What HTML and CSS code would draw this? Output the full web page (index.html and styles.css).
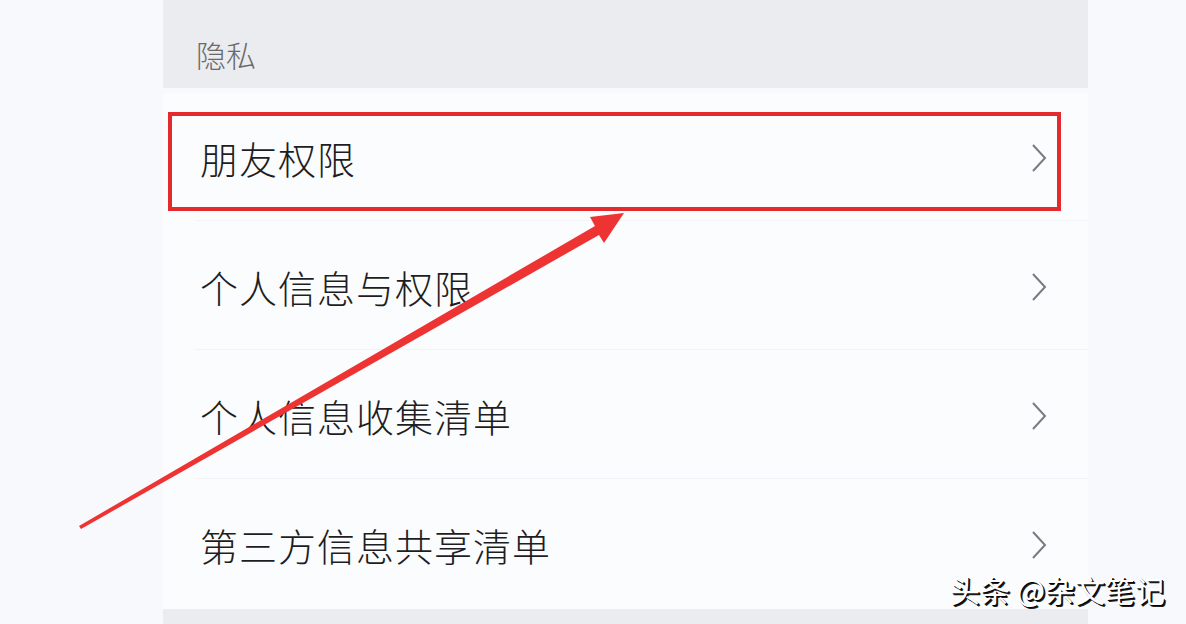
FILE: index.html
```html
<!DOCTYPE html>
<html lang="zh-CN">
<head>
<meta charset="utf-8">
<title>隐私</title>
<link rel="stylesheet" href="styles.css">
</head>
<body>
<div class="page">
  <div class="panel">
    <div class="section-head">隐私</div>
    <div class="list">
      <div class="row"><span class="label">朋友权限</span><svg class="chev" viewBox="0 0 16 30"><path d="M2 2 L14 15 L2 28" /></svg></div>
      <div class="row"><span class="label">个人信息与权限</span><svg class="chev" viewBox="0 0 16 30"><path d="M2 2 L14 15 L2 28" /></svg></div>
      <div class="row"><span class="label">个人信息收集清单</span><svg class="chev" viewBox="0 0 16 30"><path d="M2 2 L14 15 L2 28" /></svg></div>
      <div class="row"><span class="label">第三方信息共享清单</span><svg class="chev" viewBox="0 0 16 30"><path d="M2 2 L14 15 L2 28" /></svg></div>
    </div>
    <div class="foot"></div>
  </div>
  <div class="highlight"></div>
  <svg class="arrow" viewBox="0 0 1186 624" width="1186" height="624">
    <polygon points="79,526 81,529 599,235 604,243 624,213 590,217 595,226" fill="#ee3333"/>
  </svg>
  <div class="watermark">头条 @杂文笔记</div>
</div>
</body>
</html>
```
FILE: styles.css
```css
html, body {
  margin: 0;
  padding: 0;
  background: #f7f9fc;
}
body {
  font-family: "Noto Sans CJK SC", "Noto Sans", sans-serif;
  width: 1186px;
  height: 624px;
  overflow: hidden;
}
.page {
  position: relative;
  width: 1186px;
  height: 624px;
}
.panel {
  margin-left: 163px;
  width: 925px;
  display: flex;
  flex-direction: column;
}
.section-head {
  height: 88px;
  background: #ebecef;
  color: #6a6a6c;
  font-size: 30px;
  font-weight: 300;
  line-height: 30px;
  padding-left: 33px;
  padding-top: 39px;
  box-sizing: border-box;
}
.list {
  margin-top: 5px;
  display: flex;
  flex-direction: column;
}
.row {
  height: 129px;
  display: flex;
  align-items: center;
  justify-content: space-between;
  padding-left: 37px;
  padding-right: 41px;
  box-sizing: border-box;
  background: #fbfcfe;
  position: relative;
}
.row + .row::before {
  content: "";
  position: absolute;
  left: 32px;
  right: 0;
  top: -2px;
  height: 1px;
  background: #f1f3f6;
}
.label {
  font-size: 38px;
  font-weight: 300;
  color: #1e1e22;
  letter-spacing: 1px;
}
.chev {
  width: 16px;
  height: 30px;
}
.chev path {
  fill: none;
  stroke: #7a7a80;
  stroke-width: 2;
}
.foot {
  height: 15px;
  background: #ebecef;
}
.highlight {
  position: absolute;
  left: 168px;
  top: 112px;
  width: 893px;
  height: 99px;
  border: 4px solid #e42a2d;
  box-sizing: border-box;
}
.arrow {
  position: absolute;
  left: 0;
  top: 0;
}
.watermark {
  position: absolute;
  left: 950px;
  top: 571px;
  font-size: 30px;
  line-height: 36px;
  color: #ffffff;
  text-shadow: 1px 1px 0 #000, 2px 2px 0 #222;
  white-space: nowrap;
}
```
